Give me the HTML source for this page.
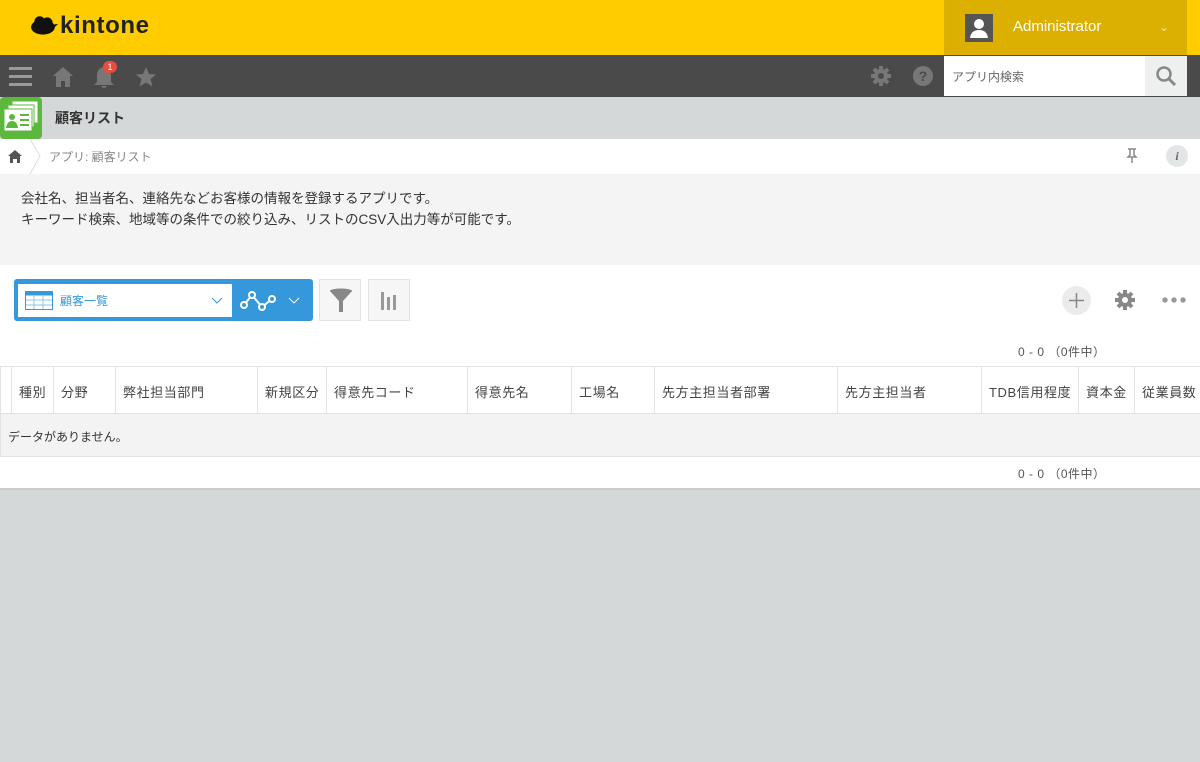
<!DOCTYPE html>
<html><head><meta charset="utf-8"><style>
*{margin:0;padding:0;box-sizing:border-box}
body{width:1200px;height:762px;overflow:hidden;background:#d4d8d9;font-family:"Liberation Sans","Noto Sans CJK JP",sans-serif;position:relative;color:#333}
.abs{position:absolute}
</style></head><body>
<div class="abs" style="left:0;top:0;width:1200px;height:55px;background:#fc0"></div>
<svg class="abs" style="left:30px;top:15px" width="28" height="22" viewBox="0 0 26 20"><ellipse cx="12" cy="11" rx="11" ry="7" fill="#111"/><circle cx="9" cy="6" r="5" fill="#111"/><circle cx="16" cy="7" r="5" fill="#111"/><path d="M20 9 L26 8 L21 13Z" fill="#111"/></svg>
<div class="abs" style="left:60px;top:12px;font-size:24px;font-weight:bold;color:#222;letter-spacing:0.6px">kintone</div>
<div class="abs" style="left:944px;top:0;width:243px;height:55px;background:#dbb000"></div>
<div class="abs" style="left:965px;top:14px;width:28px;height:28px;background:#555">
<svg width="28" height="28"><circle cx="14" cy="10" r="5" fill="#fff"/><path d="M5 24 Q6 16 14 16 Q22 16 23 24Z" fill="#fff"/></svg></div>
<div class="abs" style="left:1013px;top:18px;font-size:15px;color:#fff">Administrator</div>
<div class="abs" style="left:1159px;top:20px;font-size:12px;color:#f3e3a0">&#8964;</div>
<div class="abs" style="left:0;top:55px;width:1200px;height:42px;background:#4a4a4a"></div>
<svg class="abs" style="left:9px;top:66px" width="24" height="22"><rect y="1" width="23" height="3" fill="#999"/><rect y="9" width="23" height="3" fill="#999"/><rect y="17" width="23" height="3" fill="#999"/></svg>
<svg class="abs" style="left:52px;top:66px" width="22" height="22"><path d="M11 1 L21 10 H18 V21 H13 V15 H9 V21 H4 V10 H1Z" fill="#777"/></svg>
<svg class="abs" style="left:93px;top:64px" width="24" height="26"><path d="M11 3 Q4 4 4 12 V18 L1 21 H21 L18 18 V12 Q18 4 11 3Z M8 22 Q11 26 14 22Z" fill="#777"/></svg>
<div class="abs" style="left:103px;top:61px;width:14px;height:12px;border-radius:6px;background:#e74c3c;color:#fff;font-size:9px;text-align:center;line-height:12px">1</div>
<svg class="abs" style="left:135px;top:66px" width="22" height="22"><path d="M11 1 L14 8 L21 8.5 L15.5 13 L17.5 20.5 L11 16.5 L4.5 20.5 L6.5 13 L1 8.5 L8 8Z" fill="#777"/></svg>
<svg class="abs" style="left:870px;top:65px" width="22" height="22"><g fill="#777"><circle cx="11" cy="11" r="7"/><g stroke="#777" stroke-width="4"><line x1="11" y1="1" x2="11" y2="21"/><line x1="1" y1="11" x2="21" y2="11"/><line x1="4" y1="4" x2="18" y2="18"/><line x1="18" y1="4" x2="4" y2="18"/></g></g><circle cx="11" cy="11" r="3" fill="#4a4a4a"/></svg>
<div class="abs" style="left:913px;top:66px;width:20px;height:20px;border-radius:50%;background:#777;color:#4a4a4a;font-weight:bold;font-size:14px;text-align:center;line-height:20px">?</div>
<div class="abs" style="left:944px;top:56px;width:201px;height:40px;background:#fff"></div>
<div class="abs" style="left:952px;top:68px;font-size:12px;color:#666">アプリ内検索</div>
<div class="abs" style="left:1145px;top:56px;width:42px;height:40px;background:#eef0f0"></div>
<svg class="abs" style="left:1155px;top:65px" width="22" height="22"><circle cx="9" cy="9" r="6.5" stroke="#888" stroke-width="2.5" fill="none"/><line x1="14" y1="14" x2="20" y2="20" stroke="#888" stroke-width="3"/></svg>
<div class="abs" style="left:1187px;top:56px;width:13px;height:41px;background:#4a4a4a"></div>
<div class="abs" style="left:0;top:97px;width:42px;height:42px;border-radius:4px;background:#5cb83c"></div>
<svg class="abs" style="left:2px;top:99px" width="40" height="38"><rect x="10" y="2" width="26" height="22" fill="#fff" stroke="#5cb83c"/><rect x="6" y="6" width="26" height="22" fill="#fff" stroke="#5cb83c"/><rect x="2" y="10" width="28" height="22" fill="#fff" stroke="#5cb83c"/><circle cx="10" cy="18" r="3" fill="#5cb83c"/><path d="M4 29 Q5 22 10 22 Q15 22 16 29Z" fill="#5cb83c"/><rect x="18" y="15" width="9" height="2" fill="#5cb83c"/><rect x="18" y="20" width="9" height="2" fill="#5cb83c"/><rect x="18" y="25" width="9" height="2" fill="#5cb83c"/></svg>
<div class="abs" style="left:55px;top:108px;font-size:14px;font-weight:bold;color:#333">顧客リスト</div>
<div class="abs" style="left:0;top:139px;width:1200px;height:35px;background:#fff"></div>
<svg class="abs" style="left:8px;top:150px" width="14" height="13"><path d="M7 0 L14 6 H12 V13 H9 V9 H5 V13 H2 V6 H0Z" fill="#555"/></svg>
<svg class="abs" style="left:29px;top:139px" width="14" height="35"><path d="M1 0 L11 17 L1 35" stroke="#ddd" fill="none"/></svg>
<div class="abs" style="left:49px;top:148px;font-size:12px;color:#888">アプリ: 顧客リスト</div>
<svg class="abs" style="left:1126px;top:148px" width="12" height="16"><path d="M2 1H10M4 1V7L2 9H10L8 7V1M6 9V15" stroke="#888" stroke-width="1.5" fill="none"/></svg>
<div class="abs" style="left:1166px;top:145px;width:22px;height:22px;border-radius:50%;background:#e3e6e6;text-align:center;font:italic bold 12px 'Liberation Serif',serif;line-height:22px;color:#666">i</div>
<div class="abs" style="left:0;top:174px;width:1200px;height:91px;background:#f4f4f4"></div>
<div class="abs" style="left:21px;top:188px;font-size:13.5px;line-height:21px;color:#333">会社名、担当者名、連絡先などお客様の情報を登録するアプリです。<br>キーワード検索、地域等の条件での絞り込み、リストのCSV入出力等が可能です。</div>
<div class="abs" style="left:0;top:265px;width:1200px;height:224px;background:#fff"></div>
<div class="abs" style="left:14px;top:279px;width:299px;height:42px;background:#3498db;border-radius:3px"></div>
<div class="abs" style="left:18px;top:284px;width:214px;height:33px;background:#fff"></div>
<svg class="abs" style="left:25px;top:291px" width="29" height="20"><rect x="0.5" y="0.5" width="27" height="18" fill="#fff" stroke="#3498db"/><rect x="0.5" y="0.5" width="27" height="4" fill="#3498db"/><g stroke="#8cc4ec"><line x1="1" y1="9" x2="27" y2="9"/><line x1="1" y1="14" x2="27" y2="14"/><line x1="9" y1="4" x2="9" y2="18"/><line x1="18" y1="4" x2="18" y2="18"/></g></svg>
<div class="abs" style="left:60px;top:292px;font-size:12px;color:#3498db">顧客一覧</div>
<svg class="abs" style="left:211px;top:297px" width="12" height="8"><path d="M1 1L6 6L11 1" stroke="#3498db" fill="none"/></svg>
<svg class="abs" style="left:240px;top:289px" width="36" height="24"><path d="M4 16 L12 6 L22 18 L32 10" stroke="#fff" stroke-width="2" fill="none"/><g fill="#3498db" stroke="#fff" stroke-width="2"><circle cx="4" cy="16" r="3"/><circle cx="12" cy="6" r="3"/><circle cx="22" cy="18" r="3"/><circle cx="32" cy="10" r="3"/></g></svg>
<svg class="abs" style="left:288px;top:297px" width="12" height="8"><path d="M1 1L6 6L11 1" stroke="#fff" fill="none"/></svg>
<div class="abs" style="left:319px;top:279px;width:42px;height:42px;background:#f6f6f6;border:1px solid #e3e3e3"></div>
<svg class="abs" style="left:329px;top:288px" width="24" height="26"><ellipse cx="12" cy="3" rx="11" ry="2.5" fill="#888"/><path d="M1 3 L23 3 L14 13 V24 H10 V13Z" fill="#888"/></svg>
<div class="abs" style="left:368px;top:279px;width:42px;height:42px;background:#f6f6f6;border:1px solid #e3e3e3"></div>
<svg class="abs" style="left:380px;top:290px" width="18" height="20"><rect x="1" y="2" width="3" height="18" fill="#999"/><rect x="7" y="7" width="3" height="13" fill="#999"/><rect x="13" y="5" width="3" height="15" fill="#999"/></svg>
<div class="abs" style="left:1062px;top:286px;width:29px;height:29px;border-radius:50%;background:#ebebeb"></div>
<svg class="abs" style="left:1062px;top:286px" width="29" height="29"><path d="M14.5 7V22M7 14.5H22" stroke="#888" stroke-width="1.5"/></svg>
<svg class="abs" style="left:1114px;top:289px" width="22" height="22"><g stroke="#888" stroke-width="4"><line x1="11" y1="1" x2="11" y2="21"/><line x1="1" y1="11" x2="21" y2="11"/><line x1="4" y1="4" x2="18" y2="18"/><line x1="18" y1="4" x2="4" y2="18"/></g><circle cx="11" cy="11" r="7" fill="#888"/><circle cx="11" cy="11" r="3" fill="#fff"/></svg>
<svg class="abs" style="left:1162px;top:296px" width="24" height="8"><circle cx="3" cy="4" r="2.7" fill="#999"/><circle cx="12" cy="4" r="2.7" fill="#999"/><circle cx="21" cy="4" r="2.7" fill="#999"/></svg>
<div class="abs" style="left:1018px;top:343px;font-size:12px;color:#555;letter-spacing:0.5px">0 - 0 （0件中）</div>
<div class="abs" style="left:0;top:366px;width:1200px;height:48px;border-top:1px solid #e3e3e3;border-bottom:1px solid #e3e3e3"></div>
<div class="abs" style="left:0;top:414px;width:1200px;height:43px;background:#f3f3f3;border-bottom:1px solid #e3e3e3"></div>
<div class="abs" style="left:8px;top:428px;font-size:12px;color:#333">データがありません。</div>
<div class="abs" style="left:1018px;top:465px;font-size:12px;color:#555;letter-spacing:0.5px">0 - 0 （0件中）</div>
<div class="abs" style="left:0;top:488px;width:1200px;height:2px;background:#ccc"></div>
<div style="font-size:13px;color:#444;letter-spacing:0.6px">
<div class="abs" style="left:0;top:367px;width:1px;height:90px;background:#e3e3e3"></div>
<div class="abs" style="left:11px;top:367px;width:1px;height:46px;background:#e3e3e3"></div>
<div class="abs" style="left:19px;top:382px">種別</div>
<div class="abs" style="left:53px;top:367px;width:1px;height:46px;background:#e3e3e3"></div>
<div class="abs" style="left:61px;top:382px">分野</div>
<div class="abs" style="left:115px;top:367px;width:1px;height:46px;background:#e3e3e3"></div>
<div class="abs" style="left:123px;top:382px">弊社担当部門</div>
<div class="abs" style="left:257px;top:367px;width:1px;height:46px;background:#e3e3e3"></div>
<div class="abs" style="left:265px;top:382px">新規区分</div>
<div class="abs" style="left:326px;top:367px;width:1px;height:46px;background:#e3e3e3"></div>
<div class="abs" style="left:334px;top:382px">得意先コード</div>
<div class="abs" style="left:467px;top:367px;width:1px;height:46px;background:#e3e3e3"></div>
<div class="abs" style="left:475px;top:382px">得意先名</div>
<div class="abs" style="left:571px;top:367px;width:1px;height:46px;background:#e3e3e3"></div>
<div class="abs" style="left:579px;top:382px">工場名</div>
<div class="abs" style="left:654px;top:367px;width:1px;height:46px;background:#e3e3e3"></div>
<div class="abs" style="left:662px;top:382px">先方主担当者部署</div>
<div class="abs" style="left:837px;top:367px;width:1px;height:46px;background:#e3e3e3"></div>
<div class="abs" style="left:845px;top:382px">先方主担当者</div>
<div class="abs" style="left:981px;top:367px;width:1px;height:46px;background:#e3e3e3"></div>
<div class="abs" style="left:989px;top:382px">TDB信用程度</div>
<div class="abs" style="left:1078px;top:367px;width:1px;height:46px;background:#e3e3e3"></div>
<div class="abs" style="left:1086px;top:382px">資本金</div>
<div class="abs" style="left:1134px;top:367px;width:1px;height:46px;background:#e3e3e3"></div>
<div class="abs" style="left:1142px;top:382px;white-space:nowrap">従業員数</div>
</div>
</body></html>
